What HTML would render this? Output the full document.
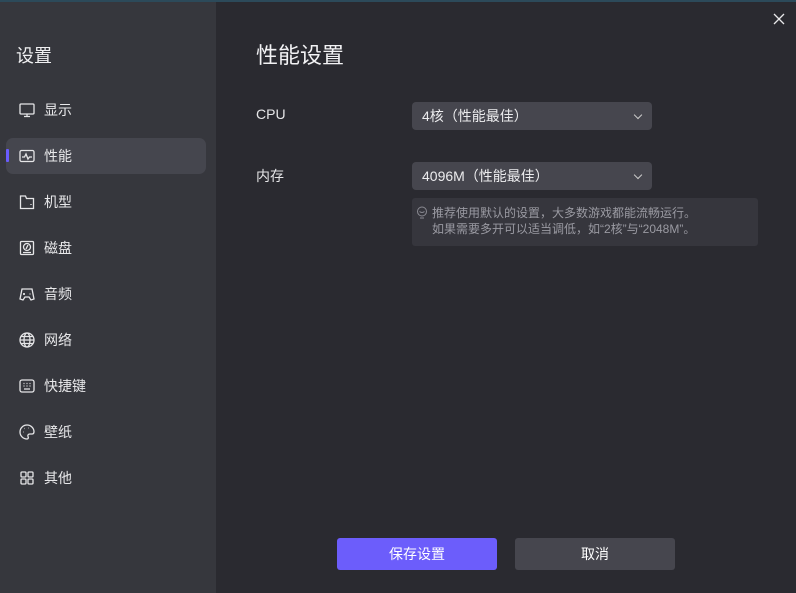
<!DOCTYPE html>
<html><head><meta charset="utf-8"><style>
*{margin:0;padding:0;box-sizing:border-box}
body{width:796px;height:593px;background:#2a2a30;font-family:"Liberation Sans","Noto Sans CJK SC",sans-serif;overflow:hidden;position:relative;color:#e8e8ea}
.top{position:absolute;left:0;top:0;width:796px;height:2px;background:#2c4a5a}
.side{position:absolute;left:0;top:2px;width:216px;height:591px;background:#36373d}
.side h1{position:absolute;left:16px;top:40px;font-size:18px;font-weight:normal;color:#f0f0f2}
.item{position:absolute;left:6px;width:200px;height:36px;font-size:14px;color:#e8e8ea;display:flex;align-items:center;padding-left:12px}
.item svg{width:18px;height:18px;margin-right:8px;stroke:#e6e6e8;fill:none;stroke-width:1.3}
.item.act{background:#45464e;border-radius:7px}
.item.act::before{content:"";position:absolute;left:0;top:11px;width:3px;height:13px;background:#6a5cff;border-radius:1px}
.main{position:absolute;left:216px;top:2px}
h2{position:absolute;left:256px;top:38px;font-size:22px;font-weight:normal;color:#f2f2f4}
.lbl{position:absolute;left:256px;font-size:14px;color:#e6e6e8}
.sel{position:absolute;left:412px;width:240px;height:28px;background:#46464e;border-radius:4px;font-size:14px;color:#ececee;padding-left:10px;line-height:28px}
.sel::after{content:"";position:absolute;right:11px;top:10px;width:5px;height:5px;border-right:1px solid #ccc;border-bottom:1px solid #ccc;transform:rotate(45deg)}
.tip{position:absolute;left:412px;top:198px;width:346px;height:48px;background:#36363d;border-radius:3px;font-size:12px;color:#9a9aa2;line-height:16px;padding:7px 0 0 20px}
.btn{position:absolute;top:538px;width:160px;height:32px;border-radius:3px;font-size:14px;text-align:center;line-height:32px;color:#fff}
.x{position:absolute;left:772px;top:12px;width:14px;height:14px}
</style></head><body>
<div class="top"></div>
<div class="side">
<h1>设置</h1>
</div>
<div class="item" style="top:92px"><svg viewBox="0 0 18 18"><rect x="2" y="3" width="14" height="10" rx="1"/><path d="M9 13v2M6 15.5h6"/></svg>显示</div>
<div class="item act" style="top:138px"><svg viewBox="0 0 18 18"><rect x="2" y="3.5" width="14" height="11" rx="1.5"/><path d="M4 10h2.5l1.5-3 2 5 1.5-2H14"/></svg>性能</div>
<div class="item" style="top:184px"><svg viewBox="0 0 18 18"><path d="M2.5 3h5l1 2.5h7v10h-13z"/><path d="M13 11v1"/></svg>机型</div>
<div class="item" style="top:230px"><svg viewBox="0 0 18 18"><rect x="2.5" y="2.5" width="13" height="13" rx="1"/><circle cx="9" cy="8" r="3.5"/><path d="M8 10l2-4M5 13.5h8"/></svg>磁盘</div>
<div class="item" style="top:276px"><svg viewBox="0 0 18 18"><path d="M4 4h10l2 10-3 1-2-3H7l-2 3-3-1z"/><path d="M6 8v2M5 9h2M11 9h.5M12.5 9h.5"/></svg>音频</div>
<div class="item" style="top:322px"><svg viewBox="0 0 18 18"><circle cx="9" cy="9" r="7"/><ellipse cx="9" cy="9" rx="3" ry="7"/><path d="M2 9h14M3 5.5h12M3 12.5h12"/></svg>网络</div>
<div class="item" style="top:368px"><svg viewBox="0 0 18 18"><rect x="2" y="3" width="14" height="12" rx="2"/><path d="M5.5 6.5h1M8.5 6.5h1M11.5 6.5h1M5.5 9h1M8.5 9h1M11.5 9h1M6 12h6"/></svg>快捷键</div>
<div class="item" style="top:414px"><svg viewBox="0 0 18 18"><path d="M9 2a7 7 0 1 0 0 14c1.5 0 1.5-1.5 1-2.5s0-2.5 2-2.5h2c1.5 0 2-1 2-2.5A7 7 0 0 0 9 2z"/><path d="M5 9h.5M6.5 5.5h.5M10.5 5h.5"/></svg>壁纸</div>
<div class="item" style="top:460px"><svg viewBox="0 0 18 18"><rect x="3" y="3" width="5" height="5" rx="1"/><rect x="10" y="3" width="5" height="5" rx="1"/><rect x="3" y="10" width="5" height="5" rx="1"/><rect x="10" y="10" width="5" height="5" rx="1"/></svg>其他</div>
<h2>性能设置</h2>
<div class="lbl" style="top:106px">CPU</div>
<div class="sel" style="top:102px">4核（性能最佳）</div>
<div class="lbl" style="top:166px">内存</div>
<div class="sel" style="top:162px">4096M（性能最佳）</div>
<div class="tip"><svg style="position:absolute;left:4px;top:8px" width="12" height="14" viewBox="0 0 12 14" fill="none" stroke="#8a8a92" stroke-width="1"><circle cx="6" cy="5.5" r="4.5"/><path d="M3.5 5.5q2.5 2 5 0M4 12h4"/></svg>推荐使用默认的设置，大多数游戏都能流畅运行。<br>如果需要多开可以适当调低，如“2核”与“2048M”。</div>
<div class="btn" style="left:337px;background:#6c5dfb">保存设置</div>
<div class="btn" style="left:515px;background:#46464e">取消</div>
<svg class="x" viewBox="0 0 14 14" stroke="#e8e8ea" stroke-width="1.3"><path d="M2 2l10 10M12 2L2 12"/></svg>
</body></html>
